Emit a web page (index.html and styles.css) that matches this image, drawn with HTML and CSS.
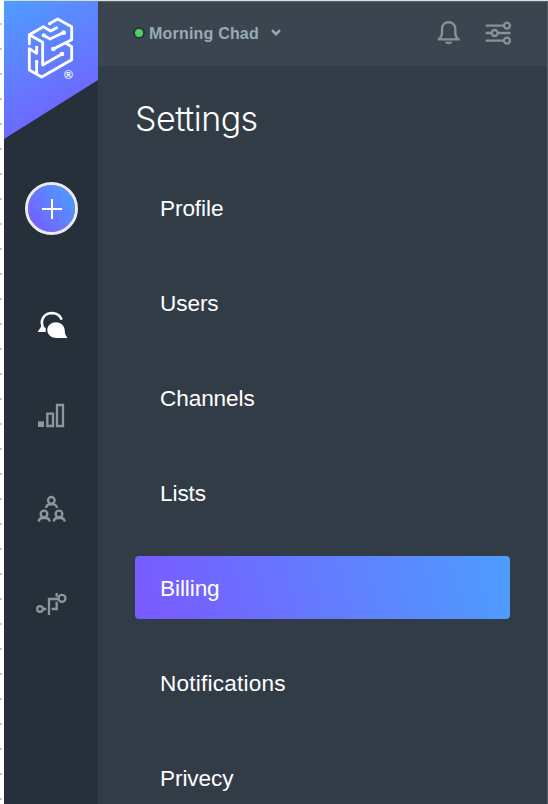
FILE: index.html
```html
<!DOCTYPE html>
<html lang="en">
<head>
<meta charset="utf-8">
<title>Settings</title>
<link rel="stylesheet" href="styles.css">
</head>
<body>
<div class="app">
  <aside class="sidebar">
    <div class="brand">
      <svg class="logo" viewBox="75 45 150 195" aria-label="Logo">
        <g class="logo-lines">
          <path d="M148 71L173 57L215 80V119L160 147M197 129L215 140V179L125 231L88 210V146L110 160V138M110 184V219"/>
          <path d="M88 133V104L130 80L152 93L173 82M88 104L128 127V195L186 162M130 105L150 117L193 97"/>
        </g>
        <g class="logo-dots"><circle cx="149" cy="71" r="5"/><circle cx="160" cy="147" r="7"/><circle cx="186" cy="162" r="7"/><circle cx="191" cy="98" r="7"/><circle cx="131" cy="106" r="6"/><circle cx="110" cy="184" r="5"/><circle cx="88" cy="132" r="4"/></g>
      </svg>
      <span class="registered">®</span>
    </div>
    <button class="add" aria-label="Add"><svg viewBox="0 0 20 20"><path d="M10 0V20M0 10H20"/></svg></button>
    <nav class="tools">
      <svg class="tool chat active" viewBox="0 0 165 150"><path class="line" d="M46 92Q59 87 52 78C46 56 60 39 82 39Q104 41 110 59"/><path class="fill" d="M38 96L50 77L62 84V96ZM93 67C109 67 119 79 119 90Q118 101 127 114H95C79 114 67 104 67 90C67 77 79 67 93 67Z"/></svg>
      <svg class="tool chart" viewBox="0 0 165 120"><path class="fill" d="M39 79H57V96H39Z"/><path class="line" d="M67 56H84V93H67ZM96 30H114V93H96Z"/></svg>
      <svg class="tool people" viewBox="0 0 165 135"><g class="line"><circle cx="79" cy="46" r="10"/><path d="M63 69Q64 58 74 58H84Q95 58 96 69"/><circle cx="57" cy="87" r="10"/><path d="M41 110Q42 99 52 99H62Q73 99 74 110"/><circle cx="102" cy="87" r="10"/><path d="M86 110Q87 99 97 99H107Q118 99 119 110"/></g></svg>
      <svg class="tool flow" viewBox="0 0 165 135"><g class="line"><circle cx="45" cy="87" r="8.5"/><path d="M54 87H64M72 105V57H99M95 39V50M80 87H95V65"/><circle cx="111" cy="55" r="10.5"/></g></svg>
    </nav>
  </aside>
  <main class="panel">
    <header class="topbar">
      <span class="status"></span>
      <span class="user">Morning Chad</span>
      <svg class="chevron" viewBox="0 0 10 7"><path d="M1 1.2L5 5.2L9 1.2"/></svg>
      <svg class="bell" viewBox="52 62 70 72"><path d="M54 117H120M59 115Q67 109 67 98V86C67 59 107 59 107 86V98Q107 109 115 115"/><path class="clapper" d="M75 124H99Q95 132 87 132Q79 132 75 124Z"/></svg>
      <svg class="sliders" viewBox="193 62 79 72"><path d="M195 76H250M195 98H213M231 98H270M195 121H250"/><circle cx="259" cy="76" r="9"/><circle cx="222" cy="98" r="9"/><circle cx="259" cy="121" r="9"/></svg>
    </header>
    <h1>Settings</h1>
    <nav class="menu">
      <a class="item">Profile</a>
      <a class="item">Users</a>
      <a class="item">Channels</a>
      <a class="item">Lists</a>
      <a class="item selected">Billing</a>
      <a class="item wide">Notifications</a>
      <a class="item">Privecy</a>
    </nav>
  </main>
</div>
</body>
</html>
```
FILE: styles.css
```css
* { box-sizing: border-box; }
body {
  margin: 0;
  height: 804px;
  overflow: hidden;
  background: linear-gradient(to bottom, transparent 23px, #c3c5c8 23px, #c3c5c8 25px) 0 0 / 2px 25px repeat-y #fff;
  font-family: "Liberation Sans", Arial, sans-serif;
}
.app {
  display: flex;
  height: 804px;
  margin-left: 4px;
  padding-top: 1px;
  background: linear-gradient(#dcdee0 1px, transparent 1px);
}
.sidebar {
  display: flex;
  flex-direction: column;
  align-items: center;
  flex: none;
  width: 94px;
  background: #26303a;
}
.brand {
  flex: none;
  width: 94px;
  height: 138px;
  padding: 14px 0 0 21px;
  background: linear-gradient(150deg, #4f9dff 0%, #7260ff 85%);
  clip-path: polygon(0 0, 100% 0, 100% 79px, 0 138px);
}
.logo { display: block; width: 50px; height: 65px; }
.logo-lines { fill: none; stroke: #fff; stroke-width: 8.5; stroke-linejoin: round; }
.logo-dots { fill: #fff; }
.registered {
  display: block;
  margin: -12px 0 0 39px;
  color: #fff;
  font-size: 12px;
  font-weight: 700;
  line-height: 14px;
}
.add {
  display: grid;
  place-items: center;
  flex: none;
  width: 53px;
  height: 53px;
  margin: 43px 0 0 1px;
  padding: 0;
  border: 3px solid #eceaf4;
  border-radius: 50%;
  background: linear-gradient(50deg, #785cff 8%, #4c9cff 90%) padding-box;
}
.add svg { width: 20px; height: 20px; fill: none; stroke: #fff; stroke-width: 2; }
.tools { display: flex; flex-direction: column; margin: 65px 0 0 2px; }
.tool { display: block; width: 55px; color: #8e969b; }
.chat { height: 50px; }
.chart { height: 40px; margin-top: 45px; }
.people, .flow { height: 45px; margin-top: 50px; }
.tool.active { color: #fff; }
.line { fill: none; stroke: currentColor; stroke-width: 7; }
.active .line { stroke-width: 8; }
.fill { fill: currentColor; }
.panel { flex: 1; background: #323c47; border-right: 1px solid #56606a; }
.topbar {
  display: flex;
  align-items: center;
  height: 65px;
  padding: 0 36px 2px 35px;
  border-top: 1px solid #56616a;
  background: #3b4550;
}
.status {
  width: 12px;
  height: 12px;
  border: 2px solid #2b343e;
  border-radius: 50%;
  background: #50cf5c;
}
.user { margin: 2px 0 0 4px; color: #97abb5; font-size: 16px; font-weight: 700; letter-spacing: .2px; line-height: 20px; }
.chevron { width: 10px; height: 7px; margin: -1px 0 0 12px; fill: none; stroke: #97abb5; stroke-width: 2.4; }
.bell, .sliders { height: 24px; fill: none; stroke: #87919a; stroke-width: 7; }
.bell { width: 23.3px; margin-left: auto; }
.bell .clapper { fill: #87919a; stroke: none; }
.sliders { width: 26.3px; margin-left: 24px; }
h1 {
  margin: 32px 0 0 37px;
  color: #fff;
  font-family: Inter, "Liberation Sans", sans-serif;
  font-size: 34px;
  font-weight: 300;
  line-height: 42px;
  letter-spacing: -.5px;
}
.menu { display: flex; flex-direction: column; gap: 32px; margin: 36px 37px 0; }
.item {
  display: flex;
  align-items: center;
  flex: none;
  height: 63px;
  padding: 2px 25px 0;
  border-radius: 4px;
  color: #fff;
  font-size: 22.6px;
  letter-spacing: -.1px;
}
.wide { letter-spacing: .2px; }
.selected { background: linear-gradient(75deg, #795aff 2%, #4e9cff 98%); }
```
